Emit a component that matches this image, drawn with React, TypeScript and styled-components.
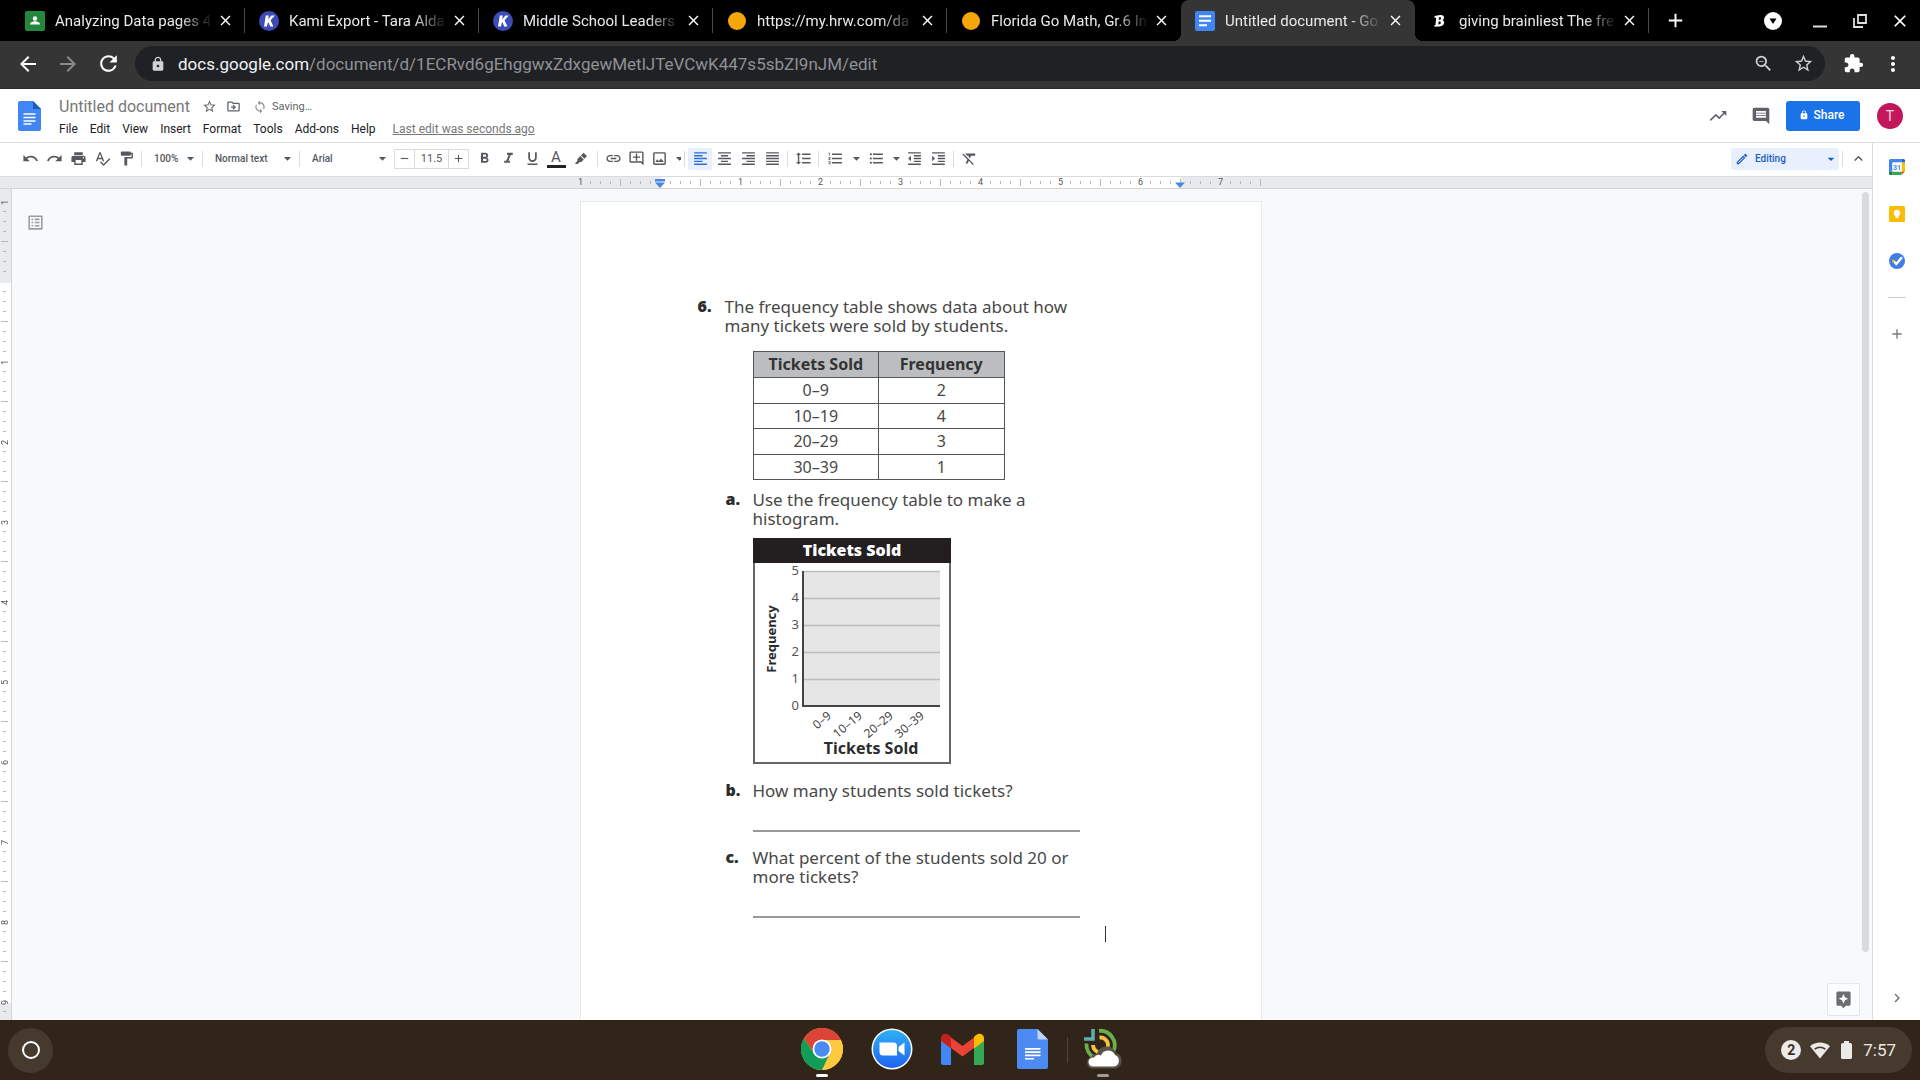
import React from "react";
import styled, { createGlobalStyle, css } from "styled-components";
import {
  MdUndo, MdRedo, MdPrint, MdSpellcheck, MdFormatPaint, MdArrowDropDown, MdRemove, MdAdd,
  MdFormatBold, MdFormatItalic, MdFormatUnderlined, MdLink, MdOutlineAddComment, MdOutlineImage,
  MdFormatAlignLeft, MdFormatAlignCenter, MdFormatAlignRight, MdFormatAlignJustify,
  MdFormatLineSpacing, MdFormatListNumbered, MdFormatListBulleted, MdFormatIndentDecrease,
  MdFormatIndentIncrease, MdFormatClear, MdOutlineEdit, MdKeyboardArrowUp, MdTrendingUp,
  MdComment, MdLock, MdStarBorder, MdOutlineDriveFileMove, MdSync, MdExtension, MdMoreVert,
  MdArrowBack, MdArrowForward, MdRefresh, MdZoomOut, MdOutlineListAlt, MdAssistant,
  MdChevronRight, MdClose,
} from "react-icons/md";

const ui = `Roboto, "Liberation Sans", sans-serif`;
const print = `"Noto Sans", "Open Sans", sans-serif`;

const GlobalStyle = createGlobalStyle`
  *, *::before, *::after { box-sizing: border-box; }
  body { margin: 0; font-family: ${ui}; background: #f8f9fa; }
  button, input, select { font: inherit; color: inherit; background: none; border: 0; padding: 0; margin: 0; }
  svg { display: block; flex: none; }
`;

const Screen = styled.div`
  display: flex;
  flex-direction: column;
  height: 100vh;
  overflow: hidden;
`;

/* ---------- Browser chrome ---------- */

const TabStrip = styled.div`
  display: flex;
  flex: none;
  height: 41px;
  padding-left: 11px;
  background: #000;
  color: #e8eaed;
`;

const Tab = styled.div<{ $active?: boolean }>`
  display: flex;
  flex: 0 1 234px;
  align-items: center;
  min-width: 0;
  padding-left: 14px;
  font-size: 15px;
  ${(p) => p.$active && css`
    position: relative;
    border-radius: 8px 8px 0 0;
    background: #353535;
    &::before, &::after {
      content: "";
      position: absolute;
      bottom: 0;
      width: 8px;
      height: 8px;
    }
    &::before { right: 100%; background: radial-gradient(circle at 0 0, transparent 8px, #353535 8px); }
    &::after { left: 100%; background: radial-gradient(circle at 100% 0, transparent 8px, #353535 8px); }
  `}
`;

const TabTitle = styled.span`
  flex: 1;
  min-width: 0;
  margin: 0 0 0 10px;
  overflow: hidden;
  white-space: nowrap;
  line-height: 24px;
  mask-image: linear-gradient(to right, #000 calc(100% - 36px), transparent calc(100% - 2px));
`;

const TabClose = styled.button`
  display: grid;
  place-items: center;
  width: 20px;
  height: 20px;
  margin-right: 9px;
  color: #fff;
`;

const TabDivider = styled.span<{ $hidden?: boolean }>`
  width: 1px;
  height: 25px;
  background: ${(p) => (p.$hidden ? "transparent" : "#4a4a4a")};
`;

const StripButton = styled.button<{ $wide?: boolean }>`
  display: grid;
  place-items: center;
  width: ${(p) => (p.$wide ? 54 : 40)}px;
  height: 41px;
  color: #fff;
`;

const StripEnd = styled.div`
  display: flex;
  flex: 1;
  padding-left: 6px;
`;

const WindowControls = styled.div`
  display: flex;
  margin-left: auto;
`;

const AddressRow = styled.div`
  display: flex;
  flex: none;
  align-items: center;
  height: 48px;
  padding: 0 7px 2px 8px;
  background: #353535;
  border-bottom: 1px solid #2a2a2a;
  color: #fff;
`;

const NavButton = styled.button<{ $dim?: boolean }>`
  display: grid;
  place-items: center;
  flex: none;
  width: 40px;
  height: 35px;
  color: ${(p) => (p.$dim ? "#8a8a8a" : "inherit")};
`;

const Omnibox = styled.div`
  display: flex;
  flex: 1;
  align-items: center;
  height: 35px;
  margin: 0 8px 0 7px;
  padding: 0 2px 0 15px;
  border-radius: 18px;
  background: #202124;
  color: #d0d2d5;
`;

const Url = styled.div`
  flex: 1;
  margin-left: 12px;
  font-size: 17px;
  line-height: 24px;
  color: #8f9296;
  white-space: nowrap;
  b { font-weight: 400; color: #f1f3f4; }
`;

/* ---------- Docs header ---------- */

const Header = styled.header`
  display: flex;
  flex: none;
  align-items: center;
  height: 54px;
  padding: 0 17px 0 18px;
  background: #fff;
  border-bottom: 1px solid #dadce0;
`;

const HeaderText = styled.div`
  display: flex;
  flex-direction: column;
  gap: 4px;
  padding-top: 2px;
  margin-left: 18px;
`;

const TitleRow = styled.div`
  display: flex;
  align-items: center;
  height: 20px;
  color: #5f6368;
  font-size: 11px;
`;

const TitleInput = styled.input`
  width: 138px;
  font-size: 16px;
  line-height: 20px;
  color: #777;
`;

const SmallButton = styled.button`
  display: grid;
  place-items: center;
  width: 24px;
  height: 20px;
`;

const SavingState = styled.span`
  display: flex;
  align-items: center;
  gap: 5px;
  margin-left: 8px;
`;

const MenuRow = styled.nav`
  display: flex;
  gap: 12px;
  font-size: 12px;
  line-height: 16px;
  color: #202124;
`;

const LastEdit = styled.a`
  margin-left: 5px;
  color: #777;
  text-decoration: underline;
`;

const HeaderActions = styled.div`
  display: flex;
  align-items: center;
  margin-left: auto;
  color: #5f6368;
`;

const HeaderIcon = styled.button`
  display: grid;
  place-items: center;
  width: 43px;
  height: 30px;
`;

const ShareButton = styled.button`
  display: flex;
  align-items: center;
  justify-content: center;
  gap: 5px;
  width: 74px;
  height: 30px;
  padding: 0 3px 2px 0;
  margin: 0 17px 0 4px;
  border-radius: 3px;
  background: #1a73e8;
  color: #fff;
  font-size: 12px;
  font-weight: 500;
`;

const Avatar = styled.button`
  width: 26px;
  height: 26px;
  border-radius: 50%;
  background: #c2185b;
  color: #f6d5e2;
  font-size: 14px;
`;

/* ---------- Workspace ---------- */

const Workspace = styled.div`
  display: flex;
  flex: 1;
  min-height: 0;
`;

const Editor = styled.div`
  display: flex;
  flex: 1;
  flex-direction: column;
  min-width: 0;
  border-right: 1px solid #dadce0;
`;

const Toolbar = styled.div`
  display: flex;
  flex: none;
  align-items: center;
  height: 34px;
  padding: 0 2px 2px 18px;
  background: #fff;
  border-bottom: 1px solid #dadce0;
  color: #55585c;
  font-size: 11px;
`;

const ToolButton = styled.button<{ $on?: boolean; $width?: number }>`
  display: grid;
  place-items: center;
  width: ${(p) => p.$width ?? 24}px;
  height: 22px;
  border-radius: 2px;
  overflow: hidden;
  ${(p) => p.$on && css`background: #e8f0fe; color: #2a6fd6;`}
`;

const Separator = styled.span`
  width: 1px;
  height: 16px;
  margin: 0 3px;
  background: #dadce0;
`;

const Picker = styled.label<{ $width: number }>`
  display: grid;
  align-items: center;
  width: ${(p) => p.$width}px;
  font-size: 10px;
  font-weight: 500;
  > * { grid-area: 1 / 1; }
  > svg { justify-self: end; pointer-events: none; }
  select {
    width: 100%;
    height: 20px;
    padding-left: 9px;
    appearance: none;
  }
`;

const ModePicker = styled(Picker)`
  height: 22px;
  margin-left: auto;
  border-radius: 3px;
  background: #e8f0fe;
  color: #1b5fc4;
  > svg:first-child { justify-self: start; margin-left: 4px; }
  select { padding-left: 24px; }
`;

const SizeStepper = styled.div`
  display: flex;
  height: 20px;
  margin: 0 3px;
  border: 1px solid #dadce0;
  button { display: grid; place-items: center; width: 19px; }
  input {
    width: 35px;
    border: solid #dadce0;
    border-width: 0 1px;
    text-align: center;
  }
`;

const TextColor = styled.span`
  display: grid;
  justify-items: center;
  width: 19px;
  border-bottom: 3px solid #222;
  font-size: 15px;
  line-height: 15px;
`;

const RulerBar = styled.div`
  display: flex;
  flex: none;
  justify-content: center;
  height: 12px;
  padding-right: 31px;
  background: #e8eaed;
  border-bottom: 1px solid #d3d5d8;
`;

const HorizontalRuler = styled.div`
  position: relative;
  display: flex;
  background: linear-gradient(to right, transparent 85px, #fff 85px 605px, transparent 605px);
`;

const VerticalRuler = styled.div`
  display: flex;
  flex: none;
  flex-direction: column;
  width: 12px;
  padding-top: 8px;
  overflow: hidden;
  background: linear-gradient(#e8eaed 94px, #fff 94px 814px, #e8eaed 814px);
  border-right: 1px solid #d3d5d8;
`;

const Mark = styled.span<{ $vertical?: boolean }>`
  display: flex;
  flex: none;
  align-items: center;
  justify-content: center;
  width: 10px;
  height: 10px;
  color: #555;
  font-size: 9px;
  line-height: 10px;
  ${(p) => p.$vertical && css`writing-mode: vertical-rl; transform: rotate(180deg);`}
`;

const Tick = styled.span<{ $long?: boolean; $vertical?: boolean }>`
  width: ${(p) => (p.$vertical ? (p.$long ? 7 : 3) : 1)}px;
  height: ${(p) => (p.$vertical ? 1 : p.$long ? 7 : 3)}px;
  background: #b4b7bb;
`;

const IndentMarker = styled.svg<{ $inch: number }>`
  position: absolute;
  top: 2px;
  left: ${(p) => 79 + p.$inch * 80}px;
`;

const Canvas = styled.div`
  display: flex;
  flex: 1;
  min-height: 0;
  background: #f8f9fa;
`;

const Desk = styled.main`
  position: relative;
  display: flex;
  flex: 1;
  justify-content: center;
  padding: 12px 43px 0 0;
  overflow: hidden;
`;

const OutlineButton = styled.button`
  position: absolute;
  top: 24px;
  left: 14px;
  color: #9a9da1;
`;

const ScrollThumb = styled.div`
  position: absolute;
  top: 3px;
  right: 3px;
  bottom: 68px;
  width: 7px;
  border-radius: 4px;
  background: #d9dbde;
`;

const ExploreButton = styled.button`
  position: absolute;
  right: 12px;
  bottom: 4px;
  display: grid;
  place-items: center;
  width: 33px;
  height: 33px;
  border: 1px solid #e4e6e9;
  border-radius: 2px;
  background: #fbfcfd;
  color: #6b6e72;
`;

const Page = styled.article`
  width: 682px;
  padding: 95px 155px 0 117px;
  background: #fff;
  border: 1px solid #e6e8ea;
  border-bottom: 0;
  font-family: ${print};
  font-size: 17px;
  line-height: 19px;
  color: #484848;
`;

const Item = styled.section<{ $sub?: boolean }>`
  display: grid;
  grid-template-columns: 27px 1fr;
  margin-left: ${(p) => (p.$sub ? 28 : 0)}px;
  white-space: nowrap;
  > b { color: #2c2c2c; font-size: 16px; font-weight: 900; }
`;

const Prompt = styled.p`
  margin: 0;
`;

const FrequencyTable = styled.table`
  width: 252px;
  margin: 16px 0 10px 55px;
  border-collapse: collapse;
  table-layout: fixed;
  text-align: center;
  font-size: 16px;
  tr { height: 26px; }
  tbody tr:nth-child(even) { height: 25px; }
  th, td {
    padding: 0;
    border: 1px solid #555;
  }
  th { background: #bcbdc0; color: #333; }
`;

const Histogram = styled.svg`
  margin: 10px 0 17px 55px;
  font-family: ${print};
`;

const AnswerLine = styled.hr<{ $after: number }>`
  width: 327px;
  height: 2px;
  margin: 30px 0 ${(p) => p.$after}px 55px;
  border: 0;
  background: #999;
`;

const TextCaret = styled.div`
  width: 1px;
  height: 16px;
  margin-left: 407px;
  background: #333;
`;

const SidePanel = styled.aside`
  display: flex;
  flex: none;
  flex-direction: column;
  align-items: center;
  width: 47px;
  padding: 8px 0 7px;
  background: #fff;
  color: #77797c;
`;

const PanelButton = styled.button<{ $last?: boolean }>`
  display: grid;
  place-items: center;
  width: 32px;
  height: 31px;
  margin-bottom: 16px;
  ${(p) => p.$last && css`margin: auto 0 0;`}
`;

const PanelRule = styled.hr`
  width: 18px;
  height: 1px;
  margin: 5px 0 20px;
  border: 0;
  background: #c9cbce;
`;

/* ---------- Shelf ---------- */

const Shelf = styled.footer`
  display: grid;
  grid-template-columns: 1fr auto 1fr;
  flex: none;
  align-items: center;
  height: 60px;
  padding: 0 8px;
  background: #312418;
`;

const Launcher = styled.button`
  display: grid;
  place-items: center;
  width: 45px;
  height: 45px;
  border-radius: 50%;
  background: #463a2f;
`;

const LauncherRing = styled.span`
  width: 18px;
  height: 18px;
  border: 2px solid #fff;
  border-radius: 50%;
`;

const ShelfApps = styled.div`
  display: flex;
  align-items: center;
  height: 60px;
  padding-left: 5px;
`;

const ShelfApp = styled.button<{ $running?: string }>`
  display: grid;
  grid-template-rows: 57px 3px;
  place-items: center;
  width: 70px;
  &::after {
    content: "";
    width: 12px;
    height: 3px;
    margin-bottom: 6px;
    border-radius: 2px;
    background: ${(p) => p.$running ?? "transparent"};
  }
`;

const ShelfDivider = styled.span`
  width: 1px;
  height: 26px;
  background: #51463b;
`;

const Tray = styled.button`
  display: flex;
  justify-self: end;
  align-items: center;
  gap: 9px;
  height: 46px;
  padding: 3px 16px;
  border-radius: 23px;
  background: #463a2f;
  color: #ece9e6;
  font-size: 17px;
`;

const Badge = styled.span`
  width: 20px;
  height: 20px;
  border-radius: 50%;
  background: #ece9e6;
  color: #3b3025;
  font-size: 14px;
  font-weight: 700;
  line-height: 20px;
`;

/* ---------- Drawings ---------- */

const ClassroomIcon = () => (
  <svg width="20" height="20" viewBox="0 0 20 20">
    <rect width="20" height="20" rx="2" fill="#1e8e3e" />
    <rect x="1.5" y="1.5" width="17" height="17" fill="#23863c" />
    <circle cx="10" cy="7.5" r="2.2" fill="#fff" />
    <path d="M5 13.500c0-2.400 3-3.300 5-3.300s5 .9 5 3.300z" fill="#fff" />
  </svg>
);
const KamiIcon = () => (
  <svg width="20" height="20" viewBox="0 0 20 20">
    <circle cx="10" cy="10" r="10" fill="#3c4bb5" />
    <path d="M6.800 4.500h3l-.7 4 3.300-4h3.400l-4.200 4.800 2.800 6.200h-3.200l-1.700-4.300-.9 1-.6 3.300H5z" fill="#fff" />
  </svg>
);
const HrwIcon = () => (
  <svg width="20" height="20" viewBox="0 0 20 20"><circle cx="10" cy="10" r="9" fill="#f5a60a" /></svg>
);
const DocsTabIcon = () => (
  <svg width="20" height="20" viewBox="0 0 20 20">
    <rect width="20" height="20" rx="2" fill="#4285f4" />
    <path d="M4 4.300h12v2H4zM4 8.800h12v2H4zM4 13.300h8v2H4z" fill="#fff" />
  </svg>
);
const BrainlyIcon = () => (
  <svg width="20" height="20" viewBox="0 0 20 20">
    <path fillRule="evenodd" d="M5.500 5l5.500-1c2.500-.3 4 .6 4 2.500 0 1.300-.6 2.100-1.700 2.700 1.300.4 1.900 1.200 1.900 2.400 0 2.400-1.900 3.700-4.700 3.900l-5 .3v-1.700l1-.2.600-7.100H5.500zM10 6.300l-.2 2.400c1.500 0 2.200-.5 2.200-1.500 0-.7-.6-1.100-2-.9zM9.600 10.500l-.2 3c1.600 0 2.400-.6 2.400-1.700 0-1-.7-1.400-2.200-1.300z" fill="#fff" />
  </svg>
);
const DropCircle = () => (
  <svg width="18" height="18" viewBox="0 0 18 18">
    <circle cx="9" cy="9" r="9" fill="#fff" />
    <path d="M5.500 6.500h7L9 12z" fill="#000" />
  </svg>
);
const MinimizeIcon = () => (
  <svg width="16" height="16" viewBox="0 0 16 16"><path d="M1 13.500h14" stroke="#ddd" strokeWidth="2" /></svg>
);
const RestoreIcon = () => (
  <svg width="16" height="16" viewBox="0 0 16 16" fill="none" stroke="#ddd" strokeWidth="1.800">
    <path d="M6 2h8v8H6zM2 5v9h9" />
  </svg>
);
const DocsLogo = () => (
  <svg width="23" height="30" viewBox="0 0 23 30">
    <path d="M2 0h13l8 8v20a2 2 0 0 1-2 2H2a2 2 0 0 1-2-2V2a2 2 0 0 1 2-2z" fill="#4285f4" />
    <path d="M15 0l8 8h-8z" fill="#1c5bb8" />
    <path d="M5.500 13h12M5.500 16.500h12M5.500 20h12" stroke="#fff" strokeWidth="1.500" />
    <path d="M5.500 23h8" stroke="#fff" strokeWidth="1.500" />
  </svg>
);
const MarkerIcon = () => (
  <svg width="14" height="14" viewBox="0 0 14 14" fill="currentColor">
    <path d="M9.500.8l3.400 3.300-2.400 2.700-3.500-3.400zM6.300 4l3.500 3.500-2.500 2.600-1.500-.1L3.700 12H.8l2.700-3.300-.1-1.600z" />
  </svg>
);
const CalendarIcon = () => (
  <svg width="16" height="16" viewBox="0 0 16 16">
    <path d="M1.500 0h11v3.500h-9v9H0v-11A1.500 1.500 0 0 1 1.500 0z" fill="#4285f4" />
    <path d="M12.500 0h2A1.500 1.500 0 0 1 16 1.500v2h-3.500z" fill="#1967d2" />
    <path d="M12.500 3.500H16v9h-3.500z" fill="#fbbc04" />
    <path d="M3.500 12.500h9V16h-9z" fill="#34a853" />
    <path d="M0 12.500h3.500V16h-2A1.500 1.500 0 0 1 0 14.500z" fill="#188038" />
    <path d="M12.500 12.500H16L12.500 16z" fill="#ea4335" />
    <path d="M3.500 3.500h9v9h-9z" fill="#fff" />
    <text x="8" y="10.800" textAnchor="middle" fontSize="7" fontWeight="700" fill="#4285f4">31</text>
  </svg>
);
const KeepIcon = () => (
  <svg width="16" height="16" viewBox="0 0 16 16">
    <rect width="16" height="16" rx="1.500" fill="#fbbc04" />
    <circle cx="8" cy="7" r="3.200" fill="#fff" />
    <path d="M6.500 10h3v2.200h-3z" fill="#fff" />
  </svg>
);
const TasksIcon = () => (
  <svg width="16" height="16" viewBox="0 0 16 16">
    <circle cx="8" cy="8" r="8" fill="#3f7de8" />
    <circle cx="4.500" cy="8" r="1.500" fill="#fbbc04" />
    <path d="M6 9.500L7.300 11l5-6" stroke="#fff" strokeWidth="2.400" fill="none" strokeLinecap="round" />
  </svg>
);
const ChromeIcon = () => (
  <svg width="42" height="42" viewBox="0 0 42 42">
    <circle cx="21" cy="21" r="21" fill="#fdc93f" />
    <path d="M2.800 10.500A21 21 0 0 1 39.200 10.500L39.900 12H21L13.200 25.500z" fill="#db4437" />
    <path d="M2.800 10.500A21 21 0 0 0 21 42l7.800-16.500L21 30l-7.800-4.500z" fill="#0f9d58" />
    <path d="M21 12h18.900A21 21 0 0 1 21 42l7.800-12z" fill="#fdc93f" />
    <circle cx="21" cy="21" r="9.500" fill="#fff" />
    <circle cx="21" cy="21" r="7.700" fill="#4a8af4" />
  </svg>
);
const ZoomIcon = () => (
  <svg width="42" height="42" viewBox="0 0 42 42">
    <defs>
      <linearGradient id="zoomBlue" x1="0" y1="0" x2="0" y2="1">
        <stop offset="0" stopColor="#2fb0f5" /><stop offset="1" stopColor="#1f63f0" />
      </linearGradient>
    </defs>
    <circle cx="21" cy="21" r="20.500" fill="#fff" />
    <circle cx="21" cy="21" r="19" fill="url(#zoomBlue)" />
    <path d="M8.500 14.500h14a3.500 3.500 0 0 1 3.500 3.500v9.500H12A3.500 3.500 0 0 1 8.500 24zM27.500 19l6-4.500v13l-6-4.500z" fill="#fff" />
  </svg>
);
const GmailIcon = () => (
  <svg width="43" height="32" viewBox="0 0 43 32">
    <path d="M0 7v22.500A2.500 2.500 0 0 0 2.500 32H10V14z" fill="#4285f4" />
    <path d="M43 7v22.500a2.500 2.500 0 0 1-2.500 2.500H33V14z" fill="#34a853" />
    <path d="M10 4.500L21.500 13 33 4.500V15l-11.500 8.500L10 15z" fill="#ea4335" />
    <path d="M33 4l1.500-1.500C38-1 43 .8 43 5v3l-10 7.500z" fill="#fbbc04" />
    <path d="M10 4L8.500 2.500C5-1 0 .8 0 5v3l10 7.500z" fill="#c5221f" />
  </svg>
);
const DocsAppIcon = () => (
  <svg width="31" height="40" viewBox="0 0 31 40">
    <path d="M2 0h18.500L31 10.500V38a2 2 0 0 1-2 2H2a2 2 0 0 1-2-2V2a2 2 0 0 1 2-2z" fill="#4d8af2" />
    <path d="M20.500 0L31 10.500H22a1.500 1.500 0 0 1-1.500-1.500z" fill="#c0d3f9" />
    <path d="M8 19h15.500v1.700H8zM8 22.300h15.500V24H8zM8 25.600h15.500v1.700H8zM8 28.900h9v1.700H8z" fill="#fff" />
  </svg>
);
const TargetCloudIcon = () => (
  <svg width="40" height="42" viewBox="0 0 40 42" fill="none">
    <path d="M16 2.800A14.500 14.500 0 0 1 30.500 23" stroke="#69b04a" strokeWidth="3.800" />
    <path d="M3.500 15.500A14.500 14.500 0 0 0 12 30" stroke="#69b04a" strokeWidth="3.800" />
    <path d="M16.500 9.600A7.500 7.500 0 1 1 10 17" stroke="#f5c344" strokeWidth="3.800" />
    <path d="M10 1v10H1" stroke="#5fb0ac" strokeWidth="3.500" />
    <path d="M9 40.500a6 6 0 0 1-1-11.500 6 6 0 0 1 6-3 10 10 0 0 1 19-1 8 8 0 0 1-1 15.500z" fill="#5b5148" />
    <path d="M10 38.500a4.500 4.500 0 0 1 0-9h1a5.500 5.500 0 0 1 7-2 7.500 7.500 0 0 1 14-.5 6 6 0 0 1-1 11.500z" fill="#fff" />
  </svg>
);
const WifiIcon = () => (
  <svg width="20" height="17" viewBox="0 0 20 17">
    <path d="M10 16.500L0 4.200C5.500-.7 14.500-.7 20 4.200z" fill="#ece9e6" />
    <path d="M4.600 7.200c3.300-2.400 7.500-2.400 10.800 0" stroke="#463a2f" strokeWidth="1.600" fill="none" />
  </svg>
);
const BatteryIcon = () => (
  <svg width="15" height="18" viewBox="0 0 15 18">
    <path d="M5 0h5v2h1.500A1.500 1.500 0 0 1 13 3.500v13a1.500 1.500 0 0 1-1.500 1.500h-8A1.500 1.500 0 0 1 2 16.500v-13A1.500 1.500 0 0 1 3.500 2H5z" fill="#ece9e6" />
  </svg>
);

/* ---------- Data ---------- */

const tabs = [
  { title: "Analyzing Data pages 4", icon: <ClassroomIcon /> },
  { title: "Kami Export - Tara Alda", icon: <KamiIcon /> },
  { title: "Middle School Leaders", icon: <KamiIcon /> },
  { title: "https://my.hrw.com/da", icon: <HrwIcon /> },
  { title: "Florida Go Math, Gr.6 In", icon: <HrwIcon /> },
  { title: "Untitled document - Go", icon: <DocsTabIcon />, active: true },
  { title: "giving brainliest The fre", icon: <BrainlyIcon /> },
];

const menus = ["File", "Edit", "View", "Insert", "Format", "Tools", "Add-ons", "Help"];

const frequencies = [
  ["0–9", "2"],
  ["10–19", "4"],
  ["20–29", "3"],
  ["30–39", "1"],
];

const Ruler = ({ count, vertical }: { count: number; vertical?: boolean }) => (
  <>
    {Array.from({ length: count }, (_, i) => {
      const inch = Math.abs(i / 8 - 1);
      const numbered = i % 8 === 0 && inch !== 0;
      return (
        <Mark key={i} $vertical={vertical}>
          {numbered ? inch : i === 8 ? null : <Tick $vertical={vertical} $long={i % 4 === 0} />}
        </Mark>
      );
    })}
  </>
);

const Tool = ({ label, icon: Icon, on, width }: { label: string; icon: React.ElementType; on?: boolean; width?: number }) => (
  <ToolButton aria-label={label} $on={on} $width={width}><Icon size={17} /></ToolButton>
);

const TicketHistogram = () => (
  <Histogram width="198" height="226" viewBox="0 0 198 226">
    <rect x="1" y="1" width="196" height="224" fill="#fff" stroke="#666" strokeWidth="2" />
    <rect width="198" height="25" fill="#231f20" />
    <text x="99" y="18" textAnchor="middle" fontSize="16" fontWeight="900" fill="#fff">Tickets Sold</text>
    <rect x="50" y="33" width="137" height="135" fill="#e6e6e6" />
    {[0, 1, 2, 3, 4, 5].map((n) => (
      <g key={n}>
        {n > 0 && <path d={`M50 ${168 - n * 27 + 0.5}H187`} stroke="#bdbdbd" strokeWidth="1.500" />}
        <text x="46" y={172 - n * 27} textAnchor="end" fontSize="13" fill="#555">{n}</text>
      </g>
    ))}
    <path d="M50 33V168H187" fill="none" stroke="#444" strokeWidth="2" />
    <text transform="translate(23 101) rotate(-90)" textAnchor="middle" fontSize="13" fontWeight="700" fill="#2c2c2c">Frequency</text>
    {frequencies.map(([range], i) => (
      <text key={range} transform={`translate(${79 + i * 31} 179) rotate(-40)`} textAnchor="end" fontSize="12" fill="#444">{range}</text>
    ))}
    <text x="118" y="216" textAnchor="middle" fontSize="16" fontWeight="700" fill="#2c2c2c">Tickets Sold</text>
  </Histogram>
);

export default function App() {
  return (
    <Screen>
      <GlobalStyle />
      <TabStrip>
        {tabs.map((tab, i) => (
          <Tab key={tab.title} $active={tab.active}>
            {tab.icon}
            <TabTitle>{tab.title}</TabTitle>
            <TabClose aria-label="Close tab"><MdClose size={17} /></TabClose>
            <TabDivider $hidden={tab.active || tabs[i + 1]?.active} />
          </Tab>
        ))}
        <StripEnd>
          <StripButton aria-label="New tab"><MdAdd size={23} /></StripButton>
          <WindowControls>
            <StripButton aria-label="Account" $wide><DropCircle /></StripButton>
            <StripButton aria-label="Minimize"><MinimizeIcon /></StripButton>
            <StripButton aria-label="Restore"><RestoreIcon /></StripButton>
            <StripButton aria-label="Close"><MdClose size={20} /></StripButton>
          </WindowControls>
        </StripEnd>
      </TabStrip>
      <AddressRow>
        <NavButton aria-label="Back"><MdArrowBack size={24} /></NavButton>
        <NavButton aria-label="Forward" $dim><MdArrowForward size={24} /></NavButton>
        <NavButton aria-label="Reload"><MdRefresh size={25} /></NavButton>
        <Omnibox>
          <MdLock size={16} />
          <Url role="textbox" aria-label="Address" tabIndex={0}>
            <b>docs.google.com</b>/document/d/1ECRvd6gEhggwxZdxgewMetlJTeVCwK447s5sbZI9nJM/edit
          </Url>
          <NavButton aria-label="Zoom"><MdZoomOut size={21} /></NavButton>
          <NavButton aria-label="Bookmark"><MdStarBorder size={21} /></NavButton>
        </Omnibox>
        <NavButton aria-label="Extensions"><MdExtension size={21} /></NavButton>
        <NavButton aria-label="Browser menu"><MdMoreVert size={24} /></NavButton>
      </AddressRow>

      <Header>
        <DocsLogo />
        <HeaderText>
          <TitleRow>
            <TitleInput aria-label="Document title" defaultValue="Untitled document" />
            <SmallButton aria-label="Star"><MdStarBorder size={15} /></SmallButton>
            <SmallButton aria-label="Move"><MdOutlineDriveFileMove size={15} /></SmallButton>
            <SavingState><MdSync size={14} color="#8d9094" />Saving…</SavingState>
          </TitleRow>
          <MenuRow>
            {menus.map((m) => <button key={m}>{m}</button>)}
            <LastEdit href="#history">Last edit was seconds ago</LastEdit>
          </MenuRow>
        </HeaderText>
        <HeaderActions>
          <HeaderIcon aria-label="Activity"><MdTrendingUp size={20} /></HeaderIcon>
          <HeaderIcon aria-label="Comments"><MdComment size={20} /></HeaderIcon>
          <ShareButton><MdLock size={10} />Share</ShareButton>
          <Avatar aria-label="Account">T</Avatar>
        </HeaderActions>
      </Header>

      <Workspace>
        <Editor>
          <Toolbar>
            <Tool label="Undo" icon={MdUndo} />
            <Tool label="Redo" icon={MdRedo} />
            <Tool label="Print" icon={MdPrint} />
            <Tool label="Spelling" icon={MdSpellcheck} />
            <Tool label="Paint format" icon={MdFormatPaint} />
            <Separator />
            <Picker $width={54}>
              <select aria-label="Zoom"><option>100%</option></select>
              <MdArrowDropDown size={17} />
            </Picker>
            <Separator />
            <Picker $width={90}>
              <select aria-label="Styles"><option>Normal text</option></select>
              <MdArrowDropDown size={17} />
            </Picker>
            <Separator />
            <Picker $width={88}>
              <select aria-label="Font"><option>Arial</option></select>
              <MdArrowDropDown size={17} />
            </Picker>
            <SizeStepper>
              <button aria-label="Smaller"><MdRemove size={13} /></button>
              <input aria-label="Font size" defaultValue="11.5" />
              <button aria-label="Larger"><MdAdd size={13} /></button>
            </SizeStepper>
            <Tool label="Bold" icon={MdFormatBold} />
            <Tool label="Italic" icon={MdFormatItalic} />
            <Tool label="Underline" icon={MdFormatUnderlined} />
            <ToolButton aria-label="Text color"><TextColor>A</TextColor></ToolButton>
            <ToolButton aria-label="Highlight color" $width={26}><MarkerIcon /></ToolButton>
            <Separator />
            <Tool label="Link" icon={MdLink} />
            <Tool label="Comment" icon={MdOutlineAddComment} width={22} />
            <Tool label="Image" icon={MdOutlineImage} />
            <ToolButton aria-label="Image options" $width={10}><MdArrowDropDown size={17} /></ToolButton>
            <Separator />
            <Tool label="Align left" icon={MdFormatAlignLeft} on />
            <Tool label="Align center" icon={MdFormatAlignCenter} />
            <Tool label="Align right" icon={MdFormatAlignRight} />
            <Tool label="Justify" icon={MdFormatAlignJustify} />
            <Separator />
            <Tool label="Line spacing" icon={MdFormatLineSpacing} />
            <Separator />
            <Tool label="Numbered list" icon={MdFormatListNumbered} width={26} />
            <ToolButton aria-label="Numbered list options" $width={16}><MdArrowDropDown size={17} /></ToolButton>
            <Tool label="Bulleted list" icon={MdFormatListBulleted} />
            <ToolButton aria-label="Bulleted list options" $width={14}><MdArrowDropDown size={17} /></ToolButton>
            <Tool label="Decrease indent" icon={MdFormatIndentDecrease} />
            <Tool label="Increase indent" icon={MdFormatIndentIncrease} />
            <Separator />
            <Tool label="Clear formatting" icon={MdFormatClear} />
            <ModePicker $width={108}>
              <MdOutlineEdit size={14} />
              <select aria-label="Mode"><option>Editing</option></select>
              <MdArrowDropDown size={16} />
            </ModePicker>
            <Separator />
            <Tool label="Hide menus" icon={MdKeyboardArrowUp} />
          </Toolbar>
          <RulerBar>
            <HorizontalRuler>
              <Ruler count={69} />
              <IndentMarker $inch={0} width="10" height="9" viewBox="0 0 10 9">
                <path d="M0 0h10v2.500H0zM0 3.500h10L5 9z" fill="#4a86e8" />
              </IndentMarker>
              <IndentMarker $inch={6.5} width="10" height="9" viewBox="0 0 10 9">
                <path d="M0 3.500h10L5 9z" fill="#4a86e8" />
              </IndentMarker>
            </HorizontalRuler>
          </RulerBar>
          <Canvas>
            <VerticalRuler><Ruler count={83} vertical /></VerticalRuler>
            <Desk>
              <Page>
                <Item>
                  <b>6.</b>
                  <Prompt>The frequency table shows data about how<br />many tickets were sold by students.</Prompt>
                </Item>
                <FrequencyTable>
                  <thead><tr><th>Tickets Sold</th><th>Frequency</th></tr></thead>
                  <tbody>
                    {frequencies.map(([range, n]) => <tr key={range}><td>{range}</td><td>{n}</td></tr>)}
                  </tbody>
                </FrequencyTable>
                <Item $sub>
                  <b>a.</b>
                  <Prompt>Use the frequency table to make a<br />histogram.</Prompt>
                </Item>
                <TicketHistogram />
                <Item $sub>
                  <b>b.</b>
                  <Prompt>How many students sold tickets?</Prompt>
                </Item>
                <AnswerLine $after={16} />
                <Item $sub>
                  <b>c.</b>
                  <Prompt>What percent of the students sold 20 or<br />more tickets?</Prompt>
                </Item>
                <AnswerLine $after={8} />
                <TextCaret />
              </Page>
              <OutlineButton aria-label="Show outline"><MdOutlineListAlt size={19} /></OutlineButton>
              <ScrollThumb />
              <ExploreButton aria-label="Explore"><MdAssistant size={19} /></ExploreButton>
            </Desk>
          </Canvas>
        </Editor>
        <SidePanel>
          <PanelButton aria-label="Calendar"><CalendarIcon /></PanelButton>
          <PanelButton aria-label="Keep"><KeepIcon /></PanelButton>
          <PanelButton aria-label="Tasks"><TasksIcon /></PanelButton>
          <PanelRule />
          <PanelButton aria-label="Get add-ons"><MdAdd size={16} /></PanelButton>
          <PanelButton aria-label="Hide side panel" $last><MdChevronRight size={18} /></PanelButton>
        </SidePanel>
      </Workspace>

      <Shelf>
        <Launcher aria-label="Launcher"><LauncherRing /></Launcher>
        <ShelfApps>
          <ShelfApp aria-label="Chrome" $running="#fff"><ChromeIcon /></ShelfApp>
          <ShelfApp aria-label="Zoom"><ZoomIcon /></ShelfApp>
          <ShelfApp aria-label="Gmail"><GmailIcon /></ShelfApp>
          <ShelfApp aria-label="Docs"><DocsAppIcon /></ShelfApp>
          <ShelfDivider />
          <ShelfApp aria-label="Screen capture" $running="#a39c95"><TargetCloudIcon /></ShelfApp>
        </ShelfApps>
        <Tray aria-label="Status tray">
          <Badge>2</Badge>
          <WifiIcon />
          <BatteryIcon />
          7:57
        </Tray>
      </Shelf>
    </Screen>
  );
}
